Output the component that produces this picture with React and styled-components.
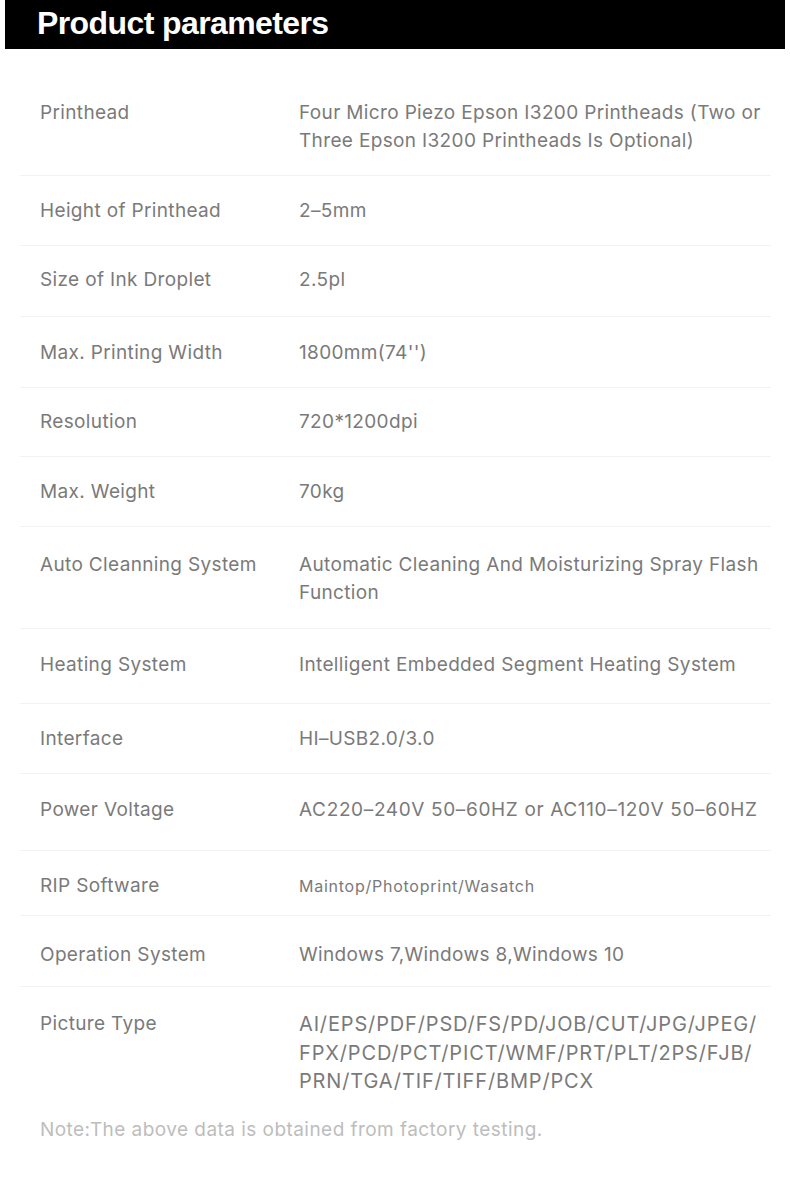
import styled, { createGlobalStyle } from "styled-components";

const GlobalStyle = createGlobalStyle`
  body {
    margin: 0;
    background: #fff;
    font-family: Inter, "Noto Sans", sans-serif;
  }
`;

const Page = styled.div`
  width: 790px;
  padding-bottom: 40px;
`;

const Header = styled.div`
  margin: 0 5px;
  height: 49px;
  background: #000;
  display: flex;
  align-items: center;
  padding-left: 32px;
`;

const Title = styled.h1`
  margin: 0;
  color: #fff;
  font-family: "Liberation Sans", Arial, sans-serif;
  font-weight: 700;
  font-size: 32px;
  letter-spacing: -0.6px;
  padding-bottom: 2px;
`;

const Table = styled.div`
  margin: 28px 19px 0 20px;
`;

const Row = styled.div`
  display: grid;
  grid-template-columns: 259px 1fr;
  padding: ${p => p.$top}px 0 ${p => p.$bottom}px 20px;
  border-top: ${p => (p.$first ? "none" : "1px solid #f2f2f2")};
`;

const Label = styled.div`
  font-size: 19px;
  line-height: 28px;
  color: #7a7a7a;
  letter-spacing: 0.35px;
`;

const Value = styled.div`
  font-size: ${p => p.$size || 19}px;
  line-height: ${p => p.$lh || 28}px;
  letter-spacing: ${p => p.$ls ?? 0.35}px;
  color: #7a7a7a;
`;

const Note = styled.p`
  margin: 20px 0 0 40px;
  font-size: 19px;
  line-height: 28px;
  letter-spacing: 0.45px;
  color: #bdbdbd;
`;

const rows = [
  { label: "Printhead", value: "Four Micro Piezo Epson I3200 Printheads (Two or Three Epson I3200 Printheads Is Optional)", top: 22, bottom: 20 },
  { label: "Height of Printhead", value: "2–5mm", top: 21, bottom: 20 },
  { label: "Size of Ink Droplet", value: "2.5pl", top: 20, bottom: 22 },
  { label: "Max. Printing Width", value: "1800mm(74'')", top: 22, bottom: 20 },
  { label: "Resolution", value: "720*1200dpi", top: 20, bottom: 20 },
  { label: "Max. Weight", value: "70kg", top: 21, bottom: 20 },
  { label: "Auto Cleanning System", value: "Automatic Cleaning And Moisturizing Spray Flash Function", top: 24, bottom: 21 },
  { label: "Heating System", value: "Intelligent Embedded Segment Heating System", top: 22, bottom: 24 },
  { label: "Interface", value: "HI–USB2.0/3.0", top: 21, bottom: 20 },
  { label: "Power Voltage", value: "AC220–240V 50–60HZ or AC110–120V 50–60HZ", top: 22, bottom: 26, ls: 0.65 },
  { label: "RIP Software", value: "Maintop/Photoprint/Wasatch", top: 21, bottom: 15, size: 16, ls: 0.75 },
  { label: "Operation System", value: "Windows 7,Windows 8,Windows 10", top: 25, bottom: 17 },
  { label: "Picture Type", value: "AI/EPS/PDF/PSD/FS/PD/JOB/CUT/JPG/JPEG/ FPX/PCD/PCT/PICT/WMF/PRT/PLT/2PS/FJB/ PRN/TGA/TIF/TIFF/BMP/PCX", top: 23, bottom: 0, lh: 28.5, size: 20, ls: 0.85 },
];

const App = () => {
  return (
    <Page>
      <GlobalStyle />
      <Header>
        <Title>Product parameters</Title>
      </Header>
      <Table>
        {rows.map((r, i) => (
          <Row key={r.label} $first={i === 0} $top={r.top} $bottom={r.bottom}>
            <Label>{r.label}</Label>
            <Value $size={r.size} $lh={r.lh} $ls={r.ls}>{r.value}</Value>
          </Row>
        ))}
      </Table>
      <Note>Note:The above data is obtained from factory testing.</Note>
    </Page>
  );
};

export default App;
